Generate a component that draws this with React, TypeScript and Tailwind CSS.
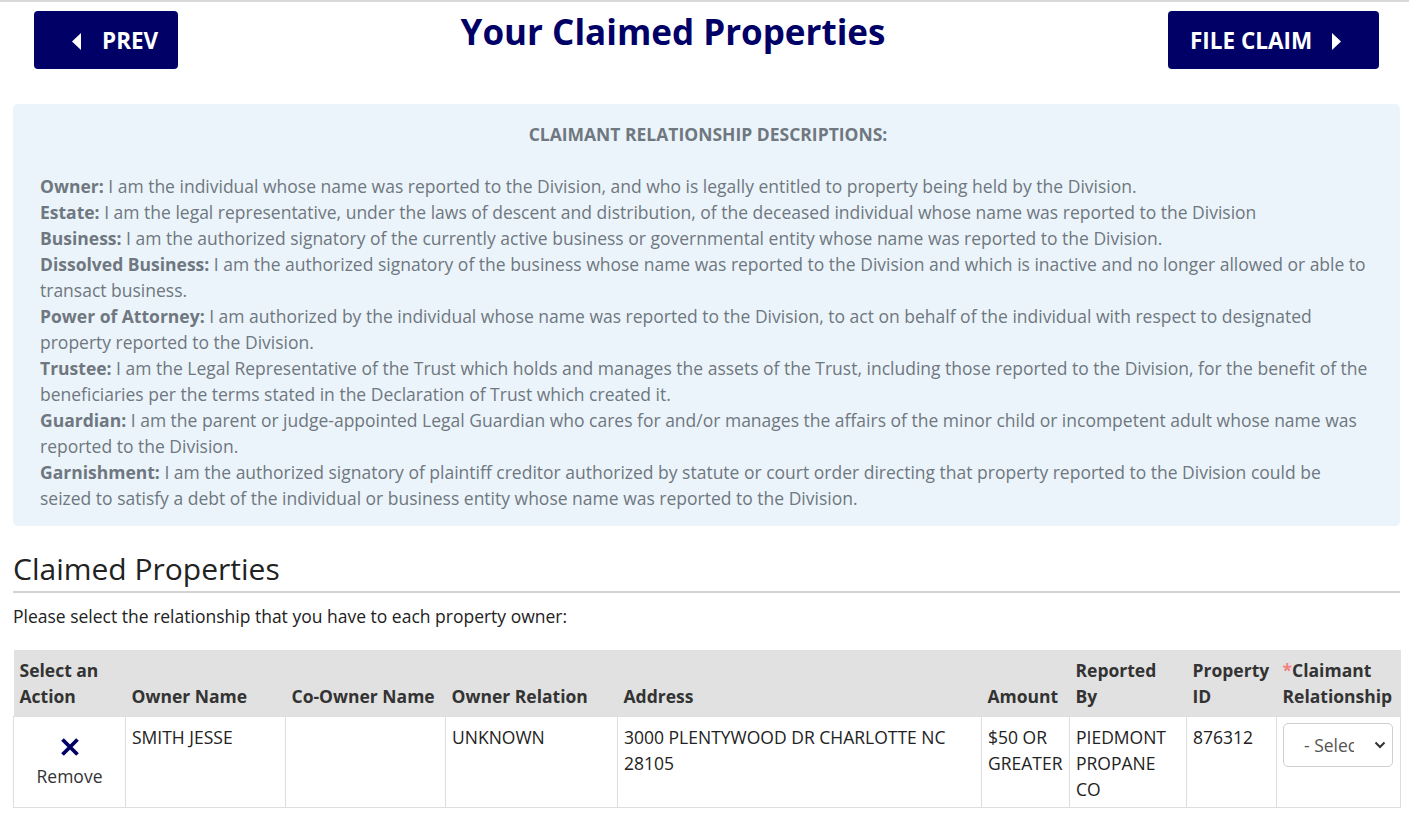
import { useState } from "react";

const descriptions = [
  {
    term: "Owner:",
    text: " I am the individual whose name was reported to the Division, and who is legally entitled to property being held by the Division.",
  },
  {
    term: "Estate:",
    text: " I am the legal representative, under the laws of descent and distribution, of the deceased individual whose name was reported to the Division",
  },
  {
    term: "Business:",
    text: " I am the authorized signatory of the currently active business or governmental entity whose name was reported to the Division.",
  },
  {
    term: "Dissolved Business:",
    text: " I am the authorized signatory of the business whose name was reported to the Division and which is inactive and no longer allowed or able to transact business.",
  },
  {
    term: "Power of Attorney:",
    text: " I am authorized by the individual whose name was reported to the Division, to act on behalf of the individual with respect to designated property reported to the Division.",
  },
  {
    term: "Trustee:",
    text: " I am the Legal Representative of the Trust which holds and manages the assets of the Trust, including those reported to the Division, for the benefit of the beneficiaries per the terms stated in the Declaration of Trust which created it.",
  },
  {
    term: "Guardian:",
    text: " I am the parent or judge-appointed Legal Guardian who cares for and/or manages the affairs of the minor child or incompetent adult whose name was reported to the Division.",
  },
  {
    term: "Garnishment:",
    text: " I am the authorized signatory of plaintiff creditor authorized by statute or court order directing that property reported to the Division could be seized to satisfy a debt of the individual or business entity whose name was reported to the Division.",
  },
];

const CaretLeft = () => (
  <svg width="9" height="17" viewBox="0 0 9 17" className="fill-white">
    <path d="M9 0 L9 17 L0 8.5 Z" />
  </svg>
);

const CaretRight = () => (
  <svg width="9" height="17" viewBox="0 0 9 17" className="fill-white">
    <path d="M0 0 L0 17 L9 8.5 Z" />
  </svg>
);

export default function App() {
  const [relationship, setRelationship] = useState("");
  const [removed, setRemoved] = useState(false);

  return (
    <div className="min-h-screen bg-white font-['Open_Sans',sans-serif] text-[17.5px] text-[#222]">
      <div className="border-t-2 border-[#d9d9d9]" />

      {/* header row */}
      <div className="flex items-start justify-between pl-[34px] pr-[30px] pt-[9px]">
        <button className="flex h-[58px] w-[144px] items-center gap-[21px] rounded-[4px] bg-[#000066] pt-[2px] pl-[38px] text-[22.5px] font-bold text-white">
          <CaretLeft />
          PREV
        </button>
        <h1 className="-mt-[2px] text-[35px] leading-[46px] font-bold text-[#000066]">
          Your Claimed Properties
        </h1>
        <button className="flex h-[58px] w-[211px] items-center gap-[20px] rounded-[4px] bg-[#000066] pt-[2px] pl-[22px] text-[22.5px] font-bold text-white">
          FILE CLAIM
          <CaretRight />
        </button>
      </div>

      <div className="px-[13px] pr-[9px]">
        {/* descriptions */}
        <div className="mt-[35px] rounded-[5px] bg-[#ebf4fa] pt-[17px] pr-[24px] pb-[15px] pl-[27px] leading-[26px] text-[#6f7780]">
          <h2 className="text-center font-bold">
            CLAIMANT RELATIONSHIP DESCRIPTIONS:
          </h2>
          <div className="mt-[26px]">
            {descriptions.map((d) => (
              <p key={d.term}>
                <span className="font-bold">{d.term}</span>
                {d.text}
              </p>
            ))}
          </div>
        </div>

        {/* claimed properties */}
        <h2 className="mt-[22px] border-b-2 border-[#d3d3d3] pb-[1px] text-[30px] leading-[42px] font-normal text-[#222]">
          Claimed Properties
        </h2>
        <p className="mt-[10px] leading-[26px]">
          Please select the relationship that you have to each property owner:
        </p>

        <table className="mt-[21px] w-full table-fixed border-collapse leading-[26px]">
          <colgroup>
            <col className="w-[112px]" />
            <col className="w-[160px]" />
            <col className="w-[160px]" />
            <col className="w-[172px]" />
            <col className="w-[364px]" />
            <col className="w-[88px]" />
            <col className="w-[117px]" />
            <col className="w-[90px]" />
            <col className="w-[124px]" />
          </colgroup>
          <thead>
            <tr className="bg-[#e1e1e1] text-left align-bottom font-bold text-[#333]">
              <th className="px-[6px] pt-[7px] pb-[7px]">Select an Action</th>
              <th className="px-[6px] pb-[7px]">Owner Name</th>
              <th className="px-[6px] pb-[7px] whitespace-nowrap">Co-Owner Name</th>
              <th className="px-[6px] pb-[7px]">Owner Relation</th>
              <th className="px-[6px] pb-[7px]">Address</th>
              <th className="px-[6px] pb-[7px]">Amount</th>
              <th className="px-[6px] pb-[7px]">Reported By</th>
              <th className="px-[6px] pb-[7px]">Property ID</th>
              <th className="px-[6px] pb-[7px] whitespace-nowrap">
                <span className="text-[#f47f7f]">*</span>Claimant
                <br />
                Relationship
              </th>
            </tr>
          </thead>
          {!removed && (
            <tbody>
              <tr className="align-top text-[#222]">
                <td className="border border-[#dedede] px-[6px] pt-[20px] pb-[6px] text-center">
                  <button
                    onClick={() => setRemoved(true)}
                    className="mx-auto flex flex-col items-center"
                  >
                    <svg width="20" height="20" viewBox="0 0 20 20" className="stroke-[#000066]">
                      <path d="M2.5 2.5 L17.5 17.5 M17.5 2.5 L2.5 17.5" strokeWidth="3.8" strokeLinecap="butt" />
                    </svg>
                    <span className="mt-[6px] leading-[26px] text-[#333]">Remove</span>
                  </button>
                </td>
                <td className="border border-[#dedede] px-[6px] pt-[7px]">SMITH JESSE</td>
                <td className="border border-[#dedede] px-[6px] pt-[7px]"></td>
                <td className="border border-[#dedede] px-[6px] pt-[7px]">UNKNOWN</td>
                <td className="border border-[#dedede] px-[6px] pt-[7px]">
                  3000 PLENTYWOOD DR CHARLOTTE NC 28105
                </td>
                <td className="border border-[#dedede] px-[6px] pt-[7px]">$50 OR GREATER</td>
                <td className="border border-[#dedede] px-[6px] pt-[7px] pb-[5px]">
                  PIEDMONT PROPANE CO
                </td>
                <td className="border border-[#dedede] px-[6px] pt-[7px]">876312</td>
                <td className="border border-[#dedede] px-[6px] pt-[6px]">
                  <div className="relative w-[110px]">
                    <select
                      value={relationship}
                      onChange={(e) => setRelationship(e.target.value)}
                      className="h-[44px] w-full appearance-none overflow-hidden rounded-[5px] border border-[#cfcfcf] bg-white pr-[38px] pl-[20px] text-[17.5px] text-[#555]"
                    >
                      <option value="">- Select -</option>
                      <option value="owner">Owner</option>
                      <option value="estate">Estate</option>
                      <option value="business">Business</option>
                      <option value="dissolved">Dissolved Business</option>
                      <option value="poa">Power of Attorney</option>
                      <option value="trustee">Trustee</option>
                      <option value="guardian">Guardian</option>
                      <option value="garnishment">Garnishment</option>
                    </select>
                    <svg
                      width="12"
                      height="8"
                      viewBox="0 0 12 8"
                      className="pointer-events-none absolute top-[18px] right-[7px] fill-none stroke-[#333]"
                    >
                      <path d="M1.5 1.5 L6 6 L10.5 1.5" strokeWidth="2" />
                    </svg>
                  </div>
                </td>
              </tr>
            </tbody>
          )}
        </table>
      </div>
    </div>
  );
}
